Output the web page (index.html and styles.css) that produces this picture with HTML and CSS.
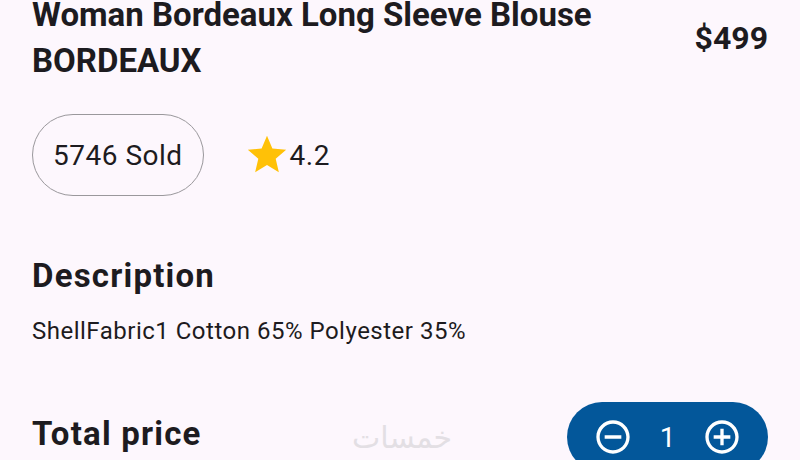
FILE: index.html
```html
<!DOCTYPE html>
<html lang="en">
<head>
    <meta charset="UTF-8">
    <meta name="viewport" content="width=device-width, initial-scale=1.0">
    <title>Product Details</title>
    <link rel="stylesheet" href="styles.css">
</head>
<body>
    <div class="details">
        <div class="head">
            <h1 class="title">Woman Bordeaux Long Sleeve Blouse BORDEAUX</h1>
            <p class="price">$499</p>
        </div>

        <div class="stats">
            <span class="sold">5746 Sold</span>
            <span class="rating">
                <svg class="star" viewBox="0 0 24 24"><path d="M12 17.27L18.18 21l-1.64-7.03L22 9.24l-7.19-.61L12 2 9.19 8.63 2 9.24l5.46 4.73L5.82 21z"/></svg>
                4.2
            </span>
        </div>

        <h2 class="section-title">Description</h2>
        <p class="desc">ShellFabric1 Cotton 65% Polyester 35%</p>

        <div class="total">
            <h2 class="section-title">Total price</h2>
            <div class="stepper">
                <svg class="step-icon" viewBox="0 0 24 24"><path d="M7 11v2h10v-2H7zm5-9C6.48 2 2 6.48 2 12s4.48 10 10 10 10-4.48 10-10S17.52 2 12 2zm0 18c-4.41 0-8-3.59-8-8s3.59-8 8-8 8 3.59 8 8-3.59 8-8 8z"/></svg>
                <span class="qty">1</span>
                <svg class="step-icon" viewBox="0 0 24 24"><path d="M13 7h-2v4H7v2h4v4h2v-4h4v-2h-4V7zm-1-5C6.48 2 2 6.48 2 12s4.48 10 10 10 10-4.48 10-10S17.52 2 12 2zm0 18c-4.41 0-8-3.59-8-8s3.59-8 8-8 8 3.59 8 8-3.59 8-8 8z"/></svg>
            </div>
        </div>
    </div>

    <div class="watermark">خمسات</div>
</body>
</html>
```

FILE: styles.css
```css
/* الصفحة */
body {
    margin: 0;
    background: #fdf7fd;
    color: #1d1b20;
    font-family: Roboto, 'Noto Sans', sans-serif;
    overflow: hidden;
    height: 460px;
}

.details {
    padding: 0 32px;
    margin-top: -8px;
}

/* العنوان والسعر */
.head {
    display: flex;
    align-items: center;
    justify-content: space-between;
    gap: 40px;
}

.title {
    margin: 0;
    font-size: 33px;
    line-height: 46px;
    font-weight: 700;
    max-width: 620px;
}

.price {
    margin: 0;
    font-size: 32px;
    font-weight: 700;
}

/* المبيعات والتقييم */
.stats {
    display: flex;
    align-items: center;
    gap: 40px;
    margin-top: 30px;
}

.sold {
    box-sizing: border-box;
    border: 1.5px solid #9a989c;
    border-radius: 41px;
    height: 82px;
    padding: 0 20px;
    display: flex;
    align-items: center;
    font-size: 28px;
    letter-spacing: 0.5px;
}

.rating {
    display: flex;
    align-items: center;
    font-size: 28px;
    letter-spacing: 0.5px;
}

.star {
    width: 46px;
    height: 46px;
    fill: #ffc107;
}

/* الوصف */
.section-title {
    margin: 60px 0 0;
    font-size: 33px;
    font-weight: 700;
    line-height: 40px;
    letter-spacing: 1.2px;
}

.desc {
    margin: 21px 0 0;
    font-size: 24px;
    line-height: 28px;
    letter-spacing: 0.5px;
}

/* السعر الكلي */
.total {
    display: flex;
    align-items: center;
    justify-content: space-between;
    margin-top: 57px;
}

.total .section-title {
    margin: 0 0 6px;
}

.stepper {
    background: #03579a;
    color: #fff;
    height: 70px;
    border-radius: 35px;
    padding: 0 26px;
    display: flex;
    align-items: center;
}

.step-icon {
    width: 40px;
    height: 40px;
    fill: #fff;
}

.qty {
    width: 69px;
    text-align: center;
    font-size: 28px;
}

.watermark {
    position: absolute;
    left: 352px;
    top: 420px;
    font-size: 30px;
    color: #e3dfe4;
    font-family: 'DejaVu Sans', sans-serif;
}
```
